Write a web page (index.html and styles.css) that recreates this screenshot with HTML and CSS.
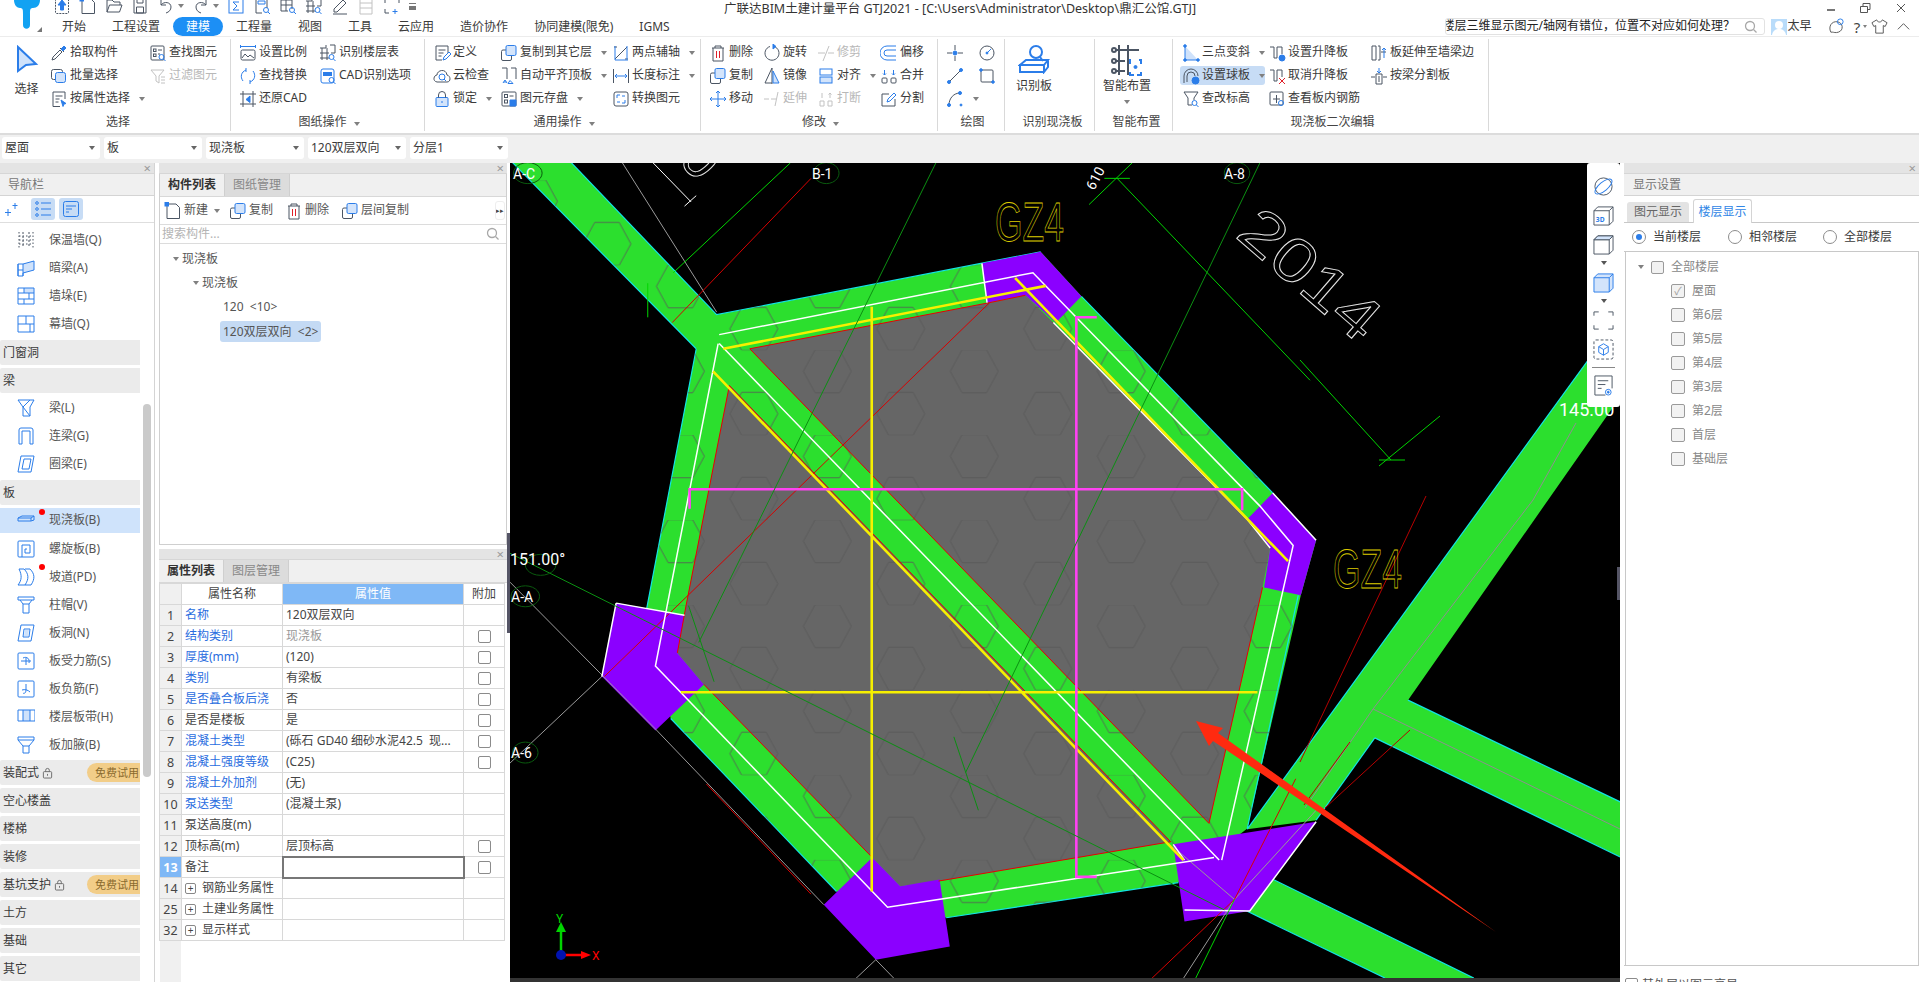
FILE: index.html
```html
<!DOCTYPE html>
<html lang="zh-CN">
<head>
<meta charset="utf-8">
<title>广联达BIM土建计量平台 GTJ2021</title>
<link rel="stylesheet" href="styles.css">
</head>
<body>
<svg class="defs" width="0" height="0">
  <defs>
    <symbol id="upl" viewBox="0 0 18 18"><rect x="2.5" y="1.5" width="13" height="15" rx="1" stroke-dasharray="2 1"/><path class="bf" d="M9 3l4 5h-2.500v5h-3V8H5z"/></symbol>
    <symbol id="new" viewBox="0 0 18 18"><path d="M3 2h9l3.500 3.500V16.500H3z"/><rect class="bf" x="1" y="0.500" width="3.500" height="3.500"/></symbol>
    <symbol id="open" viewBox="0 0 18 18"><path d="M2 15V3h5l2 2h6v3M2 15l2.500-7H17l-2.500 7z"/></symbol>
    <symbol id="save" viewBox="0 0 18 18"><path d="M3 2h12v14H3zM6 2v4h6V2M5.500 10h7v6h-7z"/></symbol>
    <symbol id="undo" viewBox="0 0 18 18"><path d="M4 3v5h5M4 8c3-4 10-3 10 2 0 3-2 5-5 6"/></symbol>
    <symbol id="redo" viewBox="0 0 18 18"><path d="M14 3v5H9M14 8c-3-4-10-3-10 2 0 3 2 5 5 6"/></symbol>
    <symbol id="sum" viewBox="0 0 18 18"><rect class="b" x="2" y="2" width="14" height="14"/><path class="b" d="M12 5H6l4 4-4 4h6"/></symbol>
    <symbol id="calc" viewBox="0 0 18 18"><path d="M3 16V2h11v9M3 16h6"/><path class="b" d="M5 4h7v3H5z"/><circle class="b" cx="13" cy="13" r="2.500"/><path class="b" d="M15 15l2 2"/></symbol>
    <symbol id="grid" viewBox="0 0 18 18"><path d="M2 3h11v9M2 3v11h7M2 8h11M7 3v11"/><circle class="b" cx="13" cy="13" r="2.500"/><path class="b" d="M15 15l2 2"/></symbol>
    <symbol id="pen" viewBox="0 0 18 18"><path d="M3 12L12 3l3 3-9 9H3zM2 17h14"/></symbol>
    <symbol id="ladder" viewBox="0 0 18 18"><path class="g" d="M3 1v16h12V1M3 6h12M3 11h12"/></symbol>
    <symbol id="sel3" viewBox="0 0 18 18"><path d="M2 6V2h4M12 2h4v4M2 12v4h4"/><path class="b" d="M12 12v5M9.500 14.500h5"/></symbol>

    <symbol id="pick" viewBox="0 0 18 18"><path d="M2 16l1-3 7-7 2 2-7 7zM10 4l4 4"/><path class="bf" d="M11 5l3-3 2 2-3 3z"/></symbol>
    <symbol id="batch" viewBox="0 0 18 18"><rect x="1.500" y="2.500" width="11" height="10" rx="2"/><rect class="bff" x="5.500" y="5.500" width="10" height="10" rx="2"/></symbol>
    <symbol id="attr" viewBox="0 0 18 18"><path d="M3 16.500V2h12v7M3 16.500h7M5.500 6h7M5.500 9h4M5.500 12h3"/><path class="bf" d="M11 10l5 3.500-2 .5-1 2.500z"/></symbol>
    <symbol id="find" viewBox="0 0 18 18"><rect x="2" y="2" width="13" height="14" rx="1"/><rect x="4.500" y="5" width="2.500" height="2.500"/><rect x="4.500" y="10" width="2.500" height="2.500"/><path d="M9 6h4M9 10h2"/><circle class="b" cx="12.500" cy="13" r="2.500"/><path class="b" d="M14.500 15l2 2"/></symbol>
    <symbol id="filter" viewBox="0 0 18 18"><path class="g" d="M2 3h13l-5 6v7l-3-2V9zM12 10h4M12 13h4M12 16h4"/></symbol>
    <symbol id="scale" viewBox="0 0 18 18"><rect x="2" y="6" width="14" height="10" rx="1.500"/><path d="M3 14l3-4 3 3 2-2 4 3"/><path class="b" d="M1.500 1v3M16.500 1v3M2 2.500h14"/></symbol>
    <symbol id="replace" viewBox="0 0 18 18"><path class="b" d="M4 14C1 10 2 5 7 3M7 1v4M14 4c3 4 2 9-3 11M11 17v-4"/></symbol>
    <symbol id="restore" viewBox="0 0 18 18"><path d="M1 4h16M1 14h16M4 1v16M14 1v16"/><path class="bf" d="M11 6L7 9.500l4 3z"/></symbol>
    <symbol id="floor" viewBox="0 0 18 18"><path d="M1 4h6V1M1 9h9M1 14h9M3 4v12M8 4v12M11 1h5v8h-4"/><circle class="b" cx="12.500" cy="13" r="2.500"/><path class="b" d="M14.500 15l2 2"/></symbol>
    <symbol id="cad" viewBox="0 0 18 18"><rect class="b" x="2" y="2" width="13" height="14" rx="2"/><path class="bs" d="M4 6h9M4 8h9"/><circle class="b" cx="12.500" cy="13" r="2.500"/><path class="b" d="M14.500 15l2 2"/></symbol>
    <symbol id="def" viewBox="0 0 18 18"><path d="M3 16V2h12v7M3 16h6M5.500 6h7M5.500 9h5M5.500 12h3"/><path class="b" d="M10 16l1-3 5-5 2 2-5 5z"/></symbol>
    <symbol id="cloud" viewBox="0 0 18 18"><path d="M4 15c-5-1-3-7 0-7 0-5 9-7 10 0 4 1 4 7 0 7z"/><circle class="b" cx="9" cy="10" r="3"/><path class="b" d="M11 12l2 2"/></symbol>
    <symbol id="lock" viewBox="0 0 18 18"><rect class="bff" x="3" y="7.500" width="12" height="9" rx="1"/><path d="M5.500 7.500V5a3.500 3.500 0 0 1 7 0v2.500"/><path class="b" d="M9 11v2"/></symbol>
    <symbol id="copyf" viewBox="0 0 18 18"><rect x="1.500" y="6" width="10" height="10.500" rx="1.500"/><rect class="bff" x="6" y="1.500" width="10" height="10" rx="1.500"/></symbol>
    <symbol id="align" viewBox="0 0 18 18"><path d="M2 1h5v11M11 1h5v11"/><path class="b" d="M10 13.500l-2 3h5zM3 16l2-3 2 3M3.700 15h2.600"/></symbol>
    <symbol id="store" viewBox="0 0 18 18"><rect x="2" y="2" width="14" height="14" rx="1"/><rect x="4.500" y="4.500" width="3" height="3"/><rect x="4.500" y="10" width="3" height="3"/><path d="M9.500 6h4"/><path class="bf" d="M10 10h6v6h-6z"/></symbol>
    <symbol id="twopt" viewBox="0 0 18 18"><path d="M3 15L15 3M2 3h3M13 15h3"/><path class="b" d="M3 2v14h13M15 2v13"/></symbol>
    <symbol id="len" viewBox="0 0 18 18"><path d="M1.500 2v14M16.500 2v14"/><path class="b" d="M3 9h12M5 7L3 9l2 2M13 7l2 2-2 2"/></symbol>
    <symbol id="conv" viewBox="0 0 18 18"><rect x="2" y="2" width="14" height="14" rx="2"/><path class="b" d="M5 8V5h3M13 10v3h-3M5 12h3M10 6h3"/></symbol>
    <symbol id="del" viewBox="0 0 18 18"><path d="M3 4h12M6 4V2h6v2M4 4v13h10V4"/><path class="r" d="M7.500 7v7M10.500 7v7"/></symbol>
    <symbol id="rot" viewBox="0 0 18 18"><path d="M11 2.500a7 7 0 1 1-4 0"/><path class="bf" d="M10 0v5l3-2.500z"/></symbol>
    <symbol id="trim" viewBox="0 0 18 18"><path class="g" d="M1 9h7M11 9h6M12 2L6 17"/></symbol>
    <symbol id="offs" viewBox="0 0 18 18"><path class="b" d="M16 2H7a7 7 0 0 0 0 14h9M16 6H7a3 3 0 0 0 0 6h9"/></symbol>
    <symbol id="mirr" viewBox="0 0 18 18"><path d="M9 1L2 16h7M9 1v16"/><path class="l2" d="M10 4l6 12h-6z"/></symbol>
    <symbol id="alg" viewBox="0 0 18 18"><rect class="b" x="3" y="2" width="12" height="6"/><rect class="bff" x="3" y="10" width="12" height="6"/></symbol>
    <symbol id="merge" viewBox="0 0 18 18"><rect x="2" y="11" width="5" height="5" rx="1"/><rect x="11" y="11" width="5" height="5" rx="1"/><path class="b" d="M4.500 3v5M3 6.500L4.500 8 6 6.500M13.500 3v5M12 6.500L13.500 8 15 6.500"/></symbol>
    <symbol id="move" viewBox="0 0 18 18"><path class="b" d="M9 1v16M1 9h16M7 3l2-2 2 2M7 15l2 2 2-2M3 7L1 9l2 2M15 7l2 2-2 2"/></symbol>
    <symbol id="ext" viewBox="0 0 18 18"><path class="g" d="M1 9h5M8 9h5M15 2l-3 14"/></symbol>
    <symbol id="brk" viewBox="0 0 18 18"><path class="g" d="M3 11h4v5H3zM11 11h4v5h-4zM5 3v5M13 3v5M11.500 4.500L13 3l1.500 1.500"/></symbol>
    <symbol id="split" viewBox="0 0 18 18"><path d="M9 4H2v12h13V9"/><path class="b" d="M7 12l1-3 6-6 2 2-6 6z"/></symbol>
    <symbol id="pt" viewBox="0 0 18 18"><path d="M9 1v5M9 12v5M1 9h5M12 9h5"/><circle class="bf" cx="9" cy="9" r="2"/></symbol>
    <symbol id="circ" viewBox="0 0 18 18"><circle cx="9" cy="9" r="7"/><path class="b" d="M9 9l4-4"/><circle class="bf" cx="9" cy="9" r="1"/></symbol>
    <symbol id="line" viewBox="0 0 18 18"><path d="M3 15L15 3"/><circle class="bf" cx="3" cy="15" r="1.500"/><circle class="bf" cx="15" cy="3" r="1.500"/></symbol>
    <symbol id="rc" viewBox="0 0 18 18"><rect x="3" y="3" width="12" height="12" rx="1"/><circle class="bf" cx="15" cy="15" r="1.300"/><circle class="bf" cx="3" cy="3" r="1.300"/></symbol>
    <symbol id="arc" viewBox="0 0 18 18"><path d="M3 15C3 8 8 3 14 3"/><circle class="bf" cx="3" cy="15" r="1.500"/><circle class="bf" cx="14" cy="3" r="1.500"/><circle class="bf" cx="15" cy="15" r="1"/></symbol>
    <symbol id="slope" viewBox="0 0 18 18"><path class="l" d="M3 2v14h13z"/><path class="b" d="M3 2v14h13"/><circle class="bf" cx="3" cy="2" r="1.300"/><circle class="bf" cx="3" cy="16" r="1.300"/><circle class="bf" cx="16" cy="16" r="1.300"/></symbol>
    <symbol id="ball" viewBox="0 0 18 18"><path d="M2 16V9a7 7 0 0 1 14 0"/><path d="M5 15V9a4 4 0 0 1 8 0"/><circle class="bf" cx="13.500" cy="13.500" r="3.500"/></symbol>
    <symbol id="elev" viewBox="0 0 18 18"><path d="M2 2h14l-4 6v2M2 2l4 6v7h4"/><circle class="b" cx="12.500" cy="13" r="2.500"/><path class="b" d="M14.500 15l2 2"/></symbol>
    <symbol id="rise" viewBox="0 0 18 18"><path d="M2 3h4v11h3V3h5v7"/><circle class="bf" cx="14" cy="14" r="3"/></symbol>
    <symbol id="cancel" viewBox="0 0 18 18"><path d="M2 3h4v11h3V3h5v7"/><path class="r" d="M11 11l6 6M17 11l-6 6"/></symbol>
    <symbol id="rebar" viewBox="0 0 18 18"><rect x="2" y="2" width="13" height="13" rx="1"/><path d="M5 9h7M8.500 5v8"/><circle class="b" cx="13" cy="13" r="2.500"/></symbol>
    <symbol id="wall" viewBox="0 0 18 18"><path d="M2 2h4v14H2zM8 2h2v14H8M11 8h5"/><path class="b" d="M14 14V4M12 6l2-2 2 2"/></symbol>
    <symbol id="beamc" viewBox="0 0 18 18"><path d="M1 10h4M13 10h4M6 7h6v10H6zM9 9v6"/><path class="b" d="M9 1v5M7 4l2 2 2-2"/></symbol>

    <symbol id="wq" viewBox="0 0 18 18"><path d="M2 1v16M16 1v16M2 5h14M2 9h14M2 13h14" stroke-dasharray="1.500 2"/><path d="M6 1v16M12 1v16" stroke-dasharray="2 2"/></symbol>
    <symbol id="al" viewBox="0 0 18 18"><path class="l" d="M6 5l11-3v9L6 14z"/><path class="b" d="M1 5l5 0 11-3v9L6 14v3H1zM1 5v12M6 5v12M1 11h5"/></symbol>
    <symbol id="wd" viewBox="0 0 18 18"><path class="l" d="M7 1h10v5H7z"/><path class="b" d="M1 1h16v16H1zM1 6h16M1 12h16M7 1v5M12 6v6M7 12v5"/></symbol>
    <symbol id="mq" viewBox="0 0 18 18"><path class="b" d="M1 1h16v16H1zM1 9h16M9 1v8M13 9v8"/></symbol>
    <symbol id="l" viewBox="0 0 18 18"><path class="b" d="M1 1h16L13 8v9H6v-9zM6 8L13 1M6 8l7 9"/></symbol>
    <symbol id="ll" viewBox="0 0 18 18"><path class="b" d="M2 17V3a2 2 0 0 1 2-2h10a2 2 0 0 1 2 2v14h-3V4H5v13z"/></symbol>
    <symbol id="ql" viewBox="0 0 18 18"><path class="b" d="M4 1h13L14 17H1zM7 4h7L12 14H5z"/></symbol>
    <symbol id="xj" viewBox="0 0 18 18"><path class="b" d="M1 6l4-2h12v4l-3 1H1zM1 6h13v3M14 6l3-2"/></symbol>
    <symbol id="lx" viewBox="0 0 18 18"><rect class="b" x="1" y="1" width="16" height="16" rx="1"/><path class="b" d="M5 17V5h8v8H8V9h2"/></symbol>
    <symbol id="pd" viewBox="0 0 18 18"><path class="b" d="M1 17c4-5 4-10 1-16h5c5 5 5 10 1 16zM8 1h5c5 5 5 10 1 16H8"/></symbol>
    <symbol id="zm" viewBox="0 0 18 18"><path class="b" d="M1 1h16v3H1zM3 4l3 4h6l3-4M6 8v9h6V8"/></symbol>
    <symbol id="bd" viewBox="0 0 18 18"><path class="l" d="M8 6h4l-1 6H7z"/><path class="b" d="M4 1h13L14 17H1zM7 5h6l-1 8H6z"/></symbol>
    <symbol id="sl" viewBox="0 0 18 18"><rect class="b" x="1" y="1" width="16" height="16" rx="1"/><path class="b" d="M4 9h10M6 6c4-2 7 1 6 5M9 6v7"/></symbol>
    <symbol id="fj" viewBox="0 0 18 18"><rect class="b" x="1" y="1" width="16" height="16" rx="1"/><path class="b" d="M5 10c3-1 6 0 8 2M9 4v6c0 3-2 4-3 3"/></symbol>
    <symbol id="bdd" viewBox="0 0 18 18"><path class="l" d="M6 2h7v11H6z"/><path class="b" d="M1 2h17v11H1zM6 2v11M13 2v11"/></symbol>
    <symbol id="jy" viewBox="0 0 18 18"><path class="b" d="M1 1h16v3H1zM1 4l5 6v7h6v-7l5-6M6 10h6"/></symbol>

    <symbol id="v-orb" viewBox="0 0 22 22"><circle cx="11" cy="11" r="9"/><ellipse class="b" cx="11" cy="11" rx="11" ry="4.500" transform="rotate(-40 11 11)"/></symbol>
    <symbol id="v-3d" viewBox="0 0 22 22"><path d="M1 6l4-4h16v15l-4 4H1zM1 6h16v15M17 6l4-4"/><text x="3" y="18" class="t3">3D</text></symbol>
    <symbol id="v-cube" viewBox="0 0 22 22"><path d="M1 6l4-4h16v15l-4 4H1zM1 6h16v15M17 6l4-4"/><path class="lb" d="M1 6l4-4h16l-4 4z"/></symbol>
    <symbol id="v-cube2" viewBox="0 0 22 22"><path class="bff" d="M1 6l4-4h16v15l-4 4H1z"/><path class="b" d="M1 6h16v15M17 6l4-4"/></symbol>
    <symbol id="v-fr" viewBox="0 0 22 22"><path d="M1 6V2h5M16 2h5v4M1 16v4h5M21 16v4h-5"/></symbol>
    <symbol id="v-box" viewBox="0 0 22 22"><rect x="1" y="1" width="20" height="20" rx="2" stroke-dasharray="3 2"/><path class="b" d="M11 5l5 3v6l-5 3-5-3V8zM6 8l5 3 5-3M11 11v6"/></symbol>
    <symbol id="v-lst" viewBox="0 0 22 22"><path d="M2 21V1h18v13M2 21h11M5 6h11M5 10h8M5 14h4"/><circle class="b" cx="16" cy="18" r="3"/><circle class="bf" cx="16" cy="18" r="1"/></symbol>
    <symbol id="pls" viewBox="0 0 18 18"><path class="b" d="M5 9v7M2 12.500h6M12 3v6M9.500 5.500h5"/></symbol>
    <symbol id="lst" viewBox="0 0 18 18"><circle class="b" cx="3" cy="3" r="1.300"/><circle class="b" cx="3" cy="9" r="1.300"/><circle class="b" cx="3" cy="15" r="1.300"/><path class="b" d="M7 3h10M7 9h10M7 15h10"/></symbol>
    <symbol id="cat" viewBox="0 0 18 18"><rect class="b" x="1.500" y="1.500" width="15" height="15" rx="2"/><path class="b" d="M4 6h10M4 9h6M4 12h3"/></symbol>
    <symbol id="mag" viewBox="0 0 14 14"><circle class="gr" cx="6" cy="6" r="4.500"/><path class="gr" d="M9.500 9.500l3 3"/></symbol>
    <symbol id="lk" viewBox="0 0 12 12"><rect x="1.500" y="4.500" width="9" height="7" rx="1"/><path d="M4 4.500V3a2 2 0 0 1 4 0v1.500M6 7v2"/></symbol>
  </defs>
</svg>

<div class="app">
  <header class="top">
    <div class="logo">
      <svg class="logo-svg" viewBox="0 0 26 30" width="26" height="30"><path class="logo-t" d="M0 0h26c0 5-3 8-7 8-3 0-3 2-3 6v11c0 5-7 5-7 0V14c0-4 0-6-3-6-3 0-6-3-6-8z"/></svg>
      <i class="corner"></i>
    </div>
    <div class="top-main">
      <div class="row1">
        <div class="quick">
          <svg class="i"><use href="#upl"/></svg>
          <svg class="i"><use href="#new"/></svg>
          <svg class="i"><use href="#open"/></svg>
          <svg class="i"><use href="#save"/></svg>
          <svg class="i"><use href="#undo"/></svg><i class="caret"></i>
          <svg class="i"><use href="#redo"/></svg><i class="caret"></i>
          <svg class="i"><use href="#sum"/></svg>
          <svg class="i"><use href="#calc"/></svg>
          <svg class="i"><use href="#grid"/></svg>
          <svg class="i"><use href="#floor"/></svg>
          <svg class="i"><use href="#pen"/></svg>
          <svg class="i"><use href="#ladder"/></svg>
          <svg class="i"><use href="#sel3"/></svg>
          <i class="more"></i>
        </div>
        <div class="title">广联达BIM土建计量平台 GTJ2021 - [C:\Users\Administrator\Desktop\鼎汇公馆.GTJ]</div>
        <div class="win">
          <span class="win-min"></span>
          <svg class="win-ico" viewBox="0 0 12 12"><path d="M1.500 4.500h7v6h-7zM4 4.500V1.500h7v6H8.500"/></svg>
          <svg class="win-ico" viewBox="0 0 12 12"><path d="M2 2l8 8M10 2l-8 8"/></svg>
        </div>
      </div>
      <div class="row2">
        <nav class="tabs">
          <span class="tab">开始</span><span class="tab">工程设置</span><span class="tab on">建模</span><span class="tab">工程量</span><span class="tab">视图</span><span class="tab">工具</span><span class="tab">云应用</span><span class="tab">造价协作</span><span class="tab">协同建模(限免)</span><span class="tab">IGMS</span>
        </nav>
        <div class="search"><span class="search-t">楼层三维显示图元/轴网有错位，位置不对应如何处理？</span><svg class="mag"><use href="#mag"/></svg></div>
        <div class="avatar"><svg viewBox="0 0 16 16" width="16" height="16"><rect width="16" height="16" fill="#b9dcfa"/><circle cx="8" cy="6" r="4" fill="#fff"/><path d="M1 16c1-5 4-6 7-6s6 1 7 6z" fill="#fff"/></svg></div>
        <span class="user">太早</span>
        <div class="tools">
          <svg class="tool" viewBox="0 0 18 18"><path d="M3 15c-3-6 1-12 7-11 6 1 7 9 1 11-3 1-5 0-6 0z"/><circle class="b" cx="13" cy="4" r="3"/></svg>
          <span class="qm">?</span><i class="caret tight"></i>
          <svg class="tool shirt" viewBox="0 0 18 18"><path d="M6 2L1 5l2 4 2-1v8h8V8l2 1 2-4-5-3c-1 3-5 3-6 0z"/></svg>
          <svg class="tool" viewBox="0 0 18 18"><path d="M3 12l6-6 6 6"/></svg>
        </div>
      </div>
    </div>
  </header>

  <section class="ribbon">
    <div class="grp g1">
      <div class="grp-body">
        <div class="big big-sel">
          <svg class="big-ico" viewBox="0 0 24 28" width="24" height="28"><path class="sel-arrow" d="M3 2l18 17-10 1-8 6z"/></svg>
          <span>选择</span>
        </div>
        <div class="col w99">
          <div class="it"><svg class="i"><use href="#pick"/></svg>拾取构件</div>
          <div class="it"><svg class="i"><use href="#batch"/></svg>批量选择</div>
          <div class="it"><svg class="i"><use href="#attr"/></svg>按属性选择<i class="caret"></i></div>
        </div>
        <div class="col">
          <div class="it"><svg class="i"><use href="#find"/></svg>查找图元</div>
          <div class="it dis"><svg class="i"><use href="#filter"/></svg>过滤图元</div>
        </div>
      </div>
      <div class="grp-label">选择</div>
    </div>
    <div class="grp g2">
      <div class="grp-body">
        <div class="col w80">
          <div class="it"><svg class="i"><use href="#scale"/></svg>设置比例</div>
          <div class="it"><svg class="i"><use href="#replace"/></svg>查找替换</div>
          <div class="it"><svg class="i"><use href="#restore"/></svg>还原CAD</div>
        </div>
        <div class="col">
          <div class="it"><svg class="i"><use href="#floor"/></svg>识别楼层表</div>
          <div class="it"><svg class="i"><use href="#cad"/></svg>CAD识别选项</div>
        </div>
      </div>
      <div class="grp-label">图纸操作<i class="caret"></i></div>
    </div>
    <div class="grp g3">
      <div class="grp-body">
        <div class="col w67">
          <div class="it"><svg class="i"><use href="#def"/></svg>定义</div>
          <div class="it"><svg class="i"><use href="#cloud"/></svg>云检查</div>
          <div class="it"><svg class="i"><use href="#lock"/></svg>锁定<i class="caret"></i></div>
        </div>
        <div class="col w112">
          <div class="it"><svg class="i"><use href="#copyf"/></svg>复制到其它层<i class="caret"></i></div>
          <div class="it"><svg class="i"><use href="#align"/></svg>自动平齐顶板<i class="caret"></i></div>
          <div class="it"><svg class="i"><use href="#store"/></svg>图元存盘<i class="caret"></i></div>
        </div>
        <div class="col">
          <div class="it"><svg class="i"><use href="#twopt"/></svg>两点辅轴<i class="caret"></i></div>
          <div class="it"><svg class="i"><use href="#len"/></svg>长度标注<i class="caret"></i></div>
          <div class="it"><svg class="i"><use href="#conv"/></svg>转换图元</div>
        </div>
      </div>
      <div class="grp-label">通用操作<i class="caret"></i></div>
    </div>
    <div class="grp g4">
      <div class="grp-body">
        <div class="col w54">
          <div class="it"><svg class="i"><use href="#del"/></svg>删除</div>
          <div class="it"><svg class="i"><use href="#copyf"/></svg>复制</div>
          <div class="it"><svg class="i"><use href="#move"/></svg>移动</div>
        </div>
        <div class="col w54">
          <div class="it"><svg class="i"><use href="#rot"/></svg>旋转</div>
          <div class="it"><svg class="i"><use href="#mirr"/></svg>镜像</div>
          <div class="it dis"><svg class="i"><use href="#ext"/></svg>延伸</div>
        </div>
        <div class="col w63">
          <div class="it dis"><svg class="i"><use href="#trim"/></svg>修剪</div>
          <div class="it"><svg class="i"><use href="#alg"/></svg>对齐<i class="caret"></i></div>
          <div class="it dis"><svg class="i"><use href="#brk"/></svg>打断</div>
        </div>
        <div class="col">
          <div class="it"><svg class="i"><use href="#offs"/></svg>偏移</div>
          <div class="it"><svg class="i"><use href="#merge"/></svg>合并</div>
          <div class="it"><svg class="i"><use href="#split"/></svg>分割</div>
        </div>
      </div>
      <div class="grp-label">修改<i class="caret"></i></div>
    </div>
    <div class="grp g5">
      <div class="grp-body">
        <div class="col w32">
          <div class="it"><svg class="i"><use href="#pt"/></svg></div>
          <div class="it"><svg class="i"><use href="#line"/></svg></div>
          <div class="it"><svg class="i"><use href="#arc"/></svg><i class="caret"></i></div>
        </div>
        <div class="col">
          <div class="it"><svg class="i"><use href="#circ"/></svg></div>
          <div class="it"><svg class="i"><use href="#rc"/></svg></div>
        </div>
      </div>
      <div class="grp-label">绘图</div>
    </div>
    <div class="grp g6">
      <div class="grp-body">
        <div class="big big-rec">
          <svg class="big-ico" viewBox="0 0 32 30" width="32" height="30"><circle class="bth" cx="18" cy="8" r="6"/><path class="bth" d="M22 13l3 4"/><path class="bth" d="M2 21l6-5h22l-4 5zM2 21h24v7H2zM26 21v7l4-5v-7"/></svg>
          <span>识别板</span>
        </div>
      </div>
      <div class="grp-label">识别现浇板</div>
    </div>
    <div class="grp g7">
      <div class="grp-body">
        <div class="big big-smart">
          <svg class="big-ico" viewBox="0 0 32 32" width="32" height="32"><path class="dth" d="M8 1v30M17 1v30M4 6h24M4 17h10M4 27h10"/><circle class="dth" cx="3" cy="6" r="2"/><circle class="dth" cx="3" cy="17" r="2"/><circle class="dth" cx="3" cy="27" r="2"/><path class="bth" d="M20 16h-1v4M28 16h2v4M19 28v3h4M30 28v3h-4" /><circle class="bf" cx="24.500" cy="23" r="1.500"/></svg>
          <span>智能布置</span>
          <i class="caret caret-big"></i>
        </div>
      </div>
      <div class="grp-label">智能布置</div>
    </div>
    <div class="grp g8">
      <div class="grp-body">
        <div class="col w86">
          <div class="it"><svg class="i"><use href="#slope"/></svg>三点变斜<i class="caret"></i></div>
          <div class="it hi"><svg class="i"><use href="#ball"/></svg>设置球板<i class="caret"></i></div>
          <div class="it"><svg class="i"><use href="#elev"/></svg>查改标高</div>
        </div>
        <div class="col w102">
          <div class="it"><svg class="i"><use href="#rise"/></svg>设置升降板</div>
          <div class="it"><svg class="i"><use href="#cancel"/></svg>取消升降板</div>
          <div class="it"><svg class="i"><use href="#rebar"/></svg>查看板内钢筋</div>
        </div>
        <div class="col">
          <div class="it"><svg class="i"><use href="#wall"/></svg>板延伸至墙梁边</div>
          <div class="it"><svg class="i"><use href="#beamc"/></svg>按梁分割板</div>
        </div>
      </div>
      <div class="grp-label">现浇板二次编辑</div>
    </div>
  </section>

  <section class="combos">
    <div class="combo">屋面<i class="caret"></i></div>
    <div class="combo">板<i class="caret"></i></div>
    <div class="combo">现浇板<i class="caret"></i></div>
    <div class="combo">120双层双向<i class="caret"></i></div>
    <div class="combo">分层1<i class="caret"></i></div>
  </section>

  <main class="main">
    <aside class="nav">
      <div class="pane-top"><span class="x">×</span></div>
      <div class="pane-title">导航栏</div>
      <div class="nav-tools">
        <svg class="i"><use href="#pls"/></svg>
        <span class="nt-on"><svg class="i"><use href="#lst"/></svg></span>
        <span class="nt-on"><svg class="i"><use href="#cat"/></svg></span>
      </div>
      <div class="nav-wrap">
        <div class="nav-list">
          <div class="ni"><svg class="i"><use href="#wq"/></svg>保温墙(Q)</div>
          <div class="ni"><svg class="i"><use href="#al"/></svg>暗梁(A)</div>
          <div class="ni"><svg class="i"><use href="#wd"/></svg>墙垛(E)</div>
          <div class="ni"><svg class="i"><use href="#mq"/></svg>幕墙(Q)</div>
          <div class="nb">门窗洞</div>
          <div class="nb">梁</div>
          <div class="ni"><svg class="i"><use href="#l"/></svg>梁(L)</div>
          <div class="ni"><svg class="i"><use href="#ll"/></svg>连梁(G)</div>
          <div class="ni"><svg class="i"><use href="#ql"/></svg>圈梁(E)</div>
          <div class="nb">板</div>
          <div class="ni cur"><svg class="i"><use href="#xj"/></svg><b class="dot"></b>现浇板(B)</div>
          <div class="ni"><svg class="i"><use href="#lx"/></svg>螺旋板(B)</div>
          <div class="ni"><svg class="i"><use href="#pd"/></svg><b class="dot"></b>坡道(PD)</div>
          <div class="ni"><svg class="i"><use href="#zm"/></svg>柱帽(V)</div>
          <div class="ni"><svg class="i"><use href="#bd"/></svg>板洞(N)</div>
          <div class="ni"><svg class="i"><use href="#sl"/></svg>板受力筋(S)</div>
          <div class="ni"><svg class="i"><use href="#fj"/></svg>板负筋(F)</div>
          <div class="ni"><svg class="i"><use href="#bdd"/></svg>楼层板带(H)</div>
          <div class="ni"><svg class="i"><use href="#jy"/></svg>板加腋(B)</div>
          <div class="nb nb1">装配式<svg class="lk"><use href="#lk"/></svg><span class="free">免费试用</span></div>
          <div class="nb">空心楼盖</div>
          <div class="nb">楼梯</div>
          <div class="nb">装修</div>
          <div class="nb">基坑支护<svg class="lk"><use href="#lk"/></svg><span class="free">免费试用</span></div>
          <div class="nb">土方</div>
          <div class="nb">基础</div>
          <div class="nb">其它</div>
        </div>
        <div class="thumb"></div>
      </div>
    </aside>

    <div class="center">
      <section class="cpane">
        <div class="pane-top"><span class="x">×</span></div>
        <div class="ctabs"><span class="ct on">构件列表</span><span class="ct">图纸管理</span></div>
        <div class="ctools">
          <span class="ctb ctb0"><svg class="i"><use href="#new"/></svg>新建<i class="caret"></i></span>
          <span class="ctb"><svg class="i"><use href="#copyf"/></svg>复制</span>
          <span class="ctb"><svg class="i"><use href="#del"/></svg>删除</span>
          <span class="ctb"><svg class="i"><use href="#copyf"/></svg>层间复制</span>
          <span class="morebtn">▸▸</span>
        </div>
        <div class="csearch"><span>搜索构件...</span><svg class="mag"><use href="#mag"/></svg></div>
        <div class="tree">
          <div class="tr l1"><i class="caret"></i>现浇板</div>
          <div class="tr l2"><i class="caret"></i>现浇板</div>
          <div class="tr l3">120&nbsp; &lt;10&gt;</div>
          <div class="tr l3"><span class="trsel">120双层双向&nbsp; &lt;2&gt;</span></div>
        </div>
      </section>
      <section class="ppane">
        <div class="pane-top"><span class="x">×</span></div>
        <div class="ctabs"><span class="ct on">属性列表</span><span class="ct">图层管理</span></div>
        <div class="tbl-wrap">
          <table class="props">
            <colgroup><col class="c0"><col class="c1"><col class="c2"><col class="c3"></colgroup>
            <thead>
              <tr><th class="n"></th><th>属性名称</th><th class="hv">属性值</th><th>附加</th></tr>
            </thead>
            <tbody>
              <tr><td class="n">1</td><td class="bl">名称</td><td>120双层双向</td><td></td></tr>
              <tr><td class="n">2</td><td class="bl">结构类别</td><td class="gy">现浇板</td><td><i class="cb"></i></td></tr>
              <tr><td class="n">3</td><td class="bl">厚度(mm)</td><td>(120)</td><td><i class="cb"></i></td></tr>
              <tr><td class="n">4</td><td class="bl">类别</td><td>有梁板</td><td><i class="cb"></i></td></tr>
              <tr><td class="n">5</td><td class="bl">是否叠合板后浇</td><td>否</td><td><i class="cb"></i></td></tr>
              <tr><td class="n">6</td><td>是否是楼板</td><td>是</td><td><i class="cb"></i></td></tr>
              <tr><td class="n">7</td><td class="bl">混凝土类型</td><td>(砾石 GD40 细砂水泥42.5&nbsp; 现...</td><td><i class="cb"></i></td></tr>
              <tr><td class="n">8</td><td class="bl">混凝土强度等级</td><td>(C25)</td><td><i class="cb"></i></td></tr>
              <tr><td class="n">9</td><td class="bl">混凝土外加剂</td><td>(无)</td><td></td></tr>
              <tr><td class="n">10</td><td class="bl">泵送类型</td><td>(混凝土泵)</td><td></td></tr>
              <tr><td class="n">11</td><td>泵送高度(m)</td><td></td><td></td></tr>
              <tr><td class="n">12</td><td>顶标高(m)</td><td>层顶标高</td><td><i class="cb"></i></td></tr>
              <tr><td class="n act">13</td><td>备注</td><td class="edit"></td><td><i class="cb"></i></td></tr>
              <tr><td class="n">14</td><td><i class="plus">+</i>钢筋业务属性</td><td></td><td></td></tr>
              <tr><td class="n">25</td><td><i class="plus">+</i>土建业务属性</td><td></td><td></td></tr>
              <tr><td class="n">32</td><td><i class="plus">+</i>显示样式</td><td></td><td></td></tr>
            </tbody>
          </table>
        </div>
      </section>
      <span class="handle"></span>
    </div>

    <div class="canvas">
      <svg class="cad-svg" viewBox="510 163 1110 815" width="1110" height="815">
        <defs>
          <pattern id="hex" patternUnits="userSpaceOnUse" width="288" height="162" patternTransform="translate(550 362.500)">
            <path class="hx" d="M25 40.500L48-.5h48l23 41-23 41H48zM169 121.500l23-41h48l23 41-23 41h-48z"/>
            <path class="hx" d="M192 -.5h48l23-41M169 121.500"/>
          </pattern>
        </defs>
        <g transform="translate(510 160) scale(.5102 .5244)" class="cad">
          <g class="beam">
            <path d="M1445 1276L2136 351h40v101L1760 1030l416 194v105L1695 1102l-115 157z"/>
            <path d="M1450 1350l439 210h-174l-284-134z"/>
            <path d="M5 5H120L405 295 1040 175 1120 260 1495 635 1580 725 1550 830 1445 1275 1310 1378 855 1445 640 1395 315 1065 268 855 365 360z"/>
          </g>
          <path class="edge" d="M120 5L405 295 1040 175M1120 260L1495 635M1545 830L1445 1275M855 1445L1310 1378M315 1065L640 1395M268 855L365 360M5 5L365 360M1445 1276L2136 351"/>
          <path class="edge" d="M1695 1102L2176 1329M1760 1030L2176 1224M1695 1102L1580 1259M1450 1350l439 210M1431 1426l284 134"/>
          <g class="slab">
            <path d="M470 360L940 272 1010 258 1065 310 1440 680 1490 740 1475 815 1370 1265z"/>
            <path d="M430 430L1295 1300 840 1375 765 1385 710 1330 380 1000 328 940 345 850z"/>
          </g>
          <g class="hexes">
            <path d="M5 5H120L405 295 410 335 365 360z"/>
            <path d="M405 295L1040 175 1120 260 1495 635 1580 725 1550 830 1445 1275 1310 1378 855 1445 640 1395 315 1065 268 855 365 360z"/>
          </g>
          <g class="purple">
            <path d="M925 197L1040 175 1120 260 1070 310 1010 258 935 272z"/>
            <path d="M1495 635L1580 725 1550 830 1478 815 1490 740 1445 685z"/>
            <path d="M208 845L342 868 328 940 380 1000 285 1088 180 985z"/>
            <path d="M710 1330L765 1385 842 1372 862 1500 717 1525 615 1420z"/>
            <path d="M1300 1305L1580 1262 1450 1432 1322 1452z"/>
          </g>
          <g class="grayln">
            <path d="M220 5L405 290M0 805L285 1085 615 1420M0 1150L180 985M717 1525L670 1568M717 1525L760 1568"/>
            <path d="M1300 1310L1420 1410M1580 1240L1420 1410 1315 1568"/>
          </g>
          <g class="thinred">
            <path d="M318 310L590 35M185 985L940 272M385 1190L590 1400"/>
            <path d="M1420 1410L1250 1568M1420 1410L1540 1180"/>
          </g>
          <path class="redline" d="M470 360L940 272 1010 258M1065 310L1440 680M1475 815L1370 1265 470 360M430 430L1295 1300 840 1375M710 1330L380 1000M328 940L345 850 430 430"/>
          <g class="wline">
            <path d="M410 333L1025 215 1115 305 1470 660 1535 735 1395 1335M408 350L285 965 740 1425 1380 1330M410 350L1390 1335M1065 310L1445 685 1490 740M208 845L342 868M1495 635L1580 725M1300 1305L1322 1335M1322 1430L1450 1432 1580 1262M925 197L935 272M180 985L208 845"/>
          </g>
          <g class="yline">
            <path d="M418 360L1050 240M990 225L1525 765M398 403L1320 1335M335 1015L1465 1015M709 280V1395"/>
          </g>
          <g class="mline">
            <path d="M352 665V628H1435V668M1150 300H1110V1367H1150"/>
          </g>
          <g class="dgreen">
            <path d="M835 5L370 920M350 850L400 995M1470 5L893 1168M870 1100L918 1240M0 750L1400 1430"/>
          </g>
          <g class="bgreen">
            <path d="M550 5L320 215M270 235V300M1190 35L1568 420M1135 85L1220 5M1165 35H1215M1420 1410L1340 1568"/>
          </g>
          <g class="wline wl2"><path d="M280 5L355 80M342 88L365 68"/></g>
          <path class="hcirc" d="M60 752a30 20 0 1 1-.1 0M30 812a28 20 0 1 1-.1 0M30 1110a25 20 0 1 1-.1 0M620 5a25 20 0 1 1-.1 0M1425 5a25 20 0 1 1-.1 0M35 5a28 20 0 1 1-.1 0"/>
        </g>
        <g class="real">
          <path class="thin-gr" d="M1373 709L1620 829M1373 709L1533 500M1373 709L1305 808M1533 500L1576 423"/>
          <path class="thin-rd" d="M1410 730L1325 808M1350 742L1304 805M1426 496L1300 762"/>
          <path class="thin-bg" d="M1300 360L1391 460M1379 466L1440 416M1379 460H1405"/>
          <polygon class="arrow" points="1196,721 1223,728 1218,733 1496,932 1213,741 1209,746"/>
          <text class="ax" x="513" y="179">A-C</text>
          <text class="ax" x="812" y="179">B-1</text>
          <text class="ax" x="1224" y="179">A-8</text>
          <text class="ax ax16" x="510" y="565">151.00°</text>
          <text class="ax" x="511" y="602">A-A</text>
          <text class="ax" x="511" y="758">A-6</text>
          <text class="ax ax18" x="1559" y="416">145.00</text>
          <text class="ax" transform="translate(1094 191) rotate(-62)">610</text>
          <text class="cad-y" x="995" y="241" textLength="69" lengthAdjust="spacingAndGlyphs">GZ4</text>
          <text class="cad-y" x="1333" y="588" textLength="69" lengthAdjust="spacingAndGlyphs">GZ4</text>
          <text class="cad-w" transform="translate(1234 236) rotate(41)" textLength="165" lengthAdjust="spacingAndGlyphs">2014</text>
          <text class="cad-w cad-s" transform="translate(655 139) rotate(45)">10</text>
          <g class="gizmo">
            <path class="gz-g" d="M561 955V932"/><path class="gz-gf" d="M561 922l-5 10h10z"/>
            <path class="gz-r" d="M561 955h20"/><path class="gz-rf" d="M591 955l-10-4v8z"/>
            <circle class="gz-b" cx="561" cy="955" r="5"/>
            <text class="gz-ty" x="556" y="923">Y</text>
            <text class="gz-tx" x="592" y="960">X</text>
          </g>
        </g>
      </svg>
      <div class="vtools">
        <svg class="v"><use href="#v-orb"/></svg>
        <svg class="v"><use href="#v-3d"/></svg>
        <svg class="v"><use href="#v-cube"/></svg>
        <i class="caret vc"></i>
        <svg class="v"><use href="#v-cube2"/></svg>
        <i class="caret vc"></i>
        <svg class="v"><use href="#v-fr"/></svg>
        <svg class="v"><use href="#v-box"/></svg>
        <span class="vsep"></span>
        <svg class="v"><use href="#v-lst"/></svg>
      </div>
      <span class="handle2"></span>
      <div class="cv-strip"></div>
    </div>

    <aside class="disp">
      <div class="pane-top"><span class="x">×</span></div>
      <div class="pane-title">显示设置</div>
      <div class="dtabs"><span class="dt">图元显示</span><span class="dt on">楼层显示</span></div>
      <div class="radios">
        <span class="rd w96"><i class="radio sel"></i>当前楼层</span>
        <span class="rd w95"><i class="radio"></i>相邻楼层</span>
        <span class="rd"><i class="radio"></i>全部楼层</span>
      </div>
      <div class="flist">
        <div class="fi fi0"><i class="caret"></i><i class="cb2"></i>全部楼层</div>
        <div class="fi"><i class="cb2 chk">✓</i>屋面</div>
        <div class="fi"><i class="cb2"></i>第6层</div>
        <div class="fi"><i class="cb2"></i>第5层</div>
        <div class="fi"><i class="cb2"></i>第4层</div>
        <div class="fi"><i class="cb2"></i>第3层</div>
        <div class="fi"><i class="cb2"></i>第2层</div>
        <div class="fi"><i class="cb2"></i>首层</div>
        <div class="fi"><i class="cb2"></i>基础层</div>
      </div>
      <div class="foot"><i class="cb"></i>其外层以图元亮显</div>
    </aside>
  </main>
</div>
</body>
</html>
```
FILE: styles.css
```css
* { box-sizing: border-box; }
html, body { margin: 0; height: 100%; }
body {
  width: 1919px; height: 982px; overflow: hidden; background: #fff;
  font: 12px/1.2 "Noto Sans", "Noto Sans CJK SC", sans-serif; color: #3a3a3a;
}
i { font-style: normal; }
.defs { position: absolute; }
.app { display: flex; flex-direction: column; width: 1919px; height: 982px; }

/* svg icon palette */
.i, .v, .lk, .tool { fill: none; stroke: #4b5563; stroke-width: 1; flex: none; }
.i { width: 18px; height: 18px; }
.b { stroke: #2b7de9; }
.bs { stroke: #2b7de9; stroke-width: 2; }
.bf { fill: #2b7de9; stroke: #2b7de9; }
.bff { fill: #d3e4fb; stroke: #2b7de9; }
.l { fill: #cfe2fb; stroke: none; }
.l2 { fill: #cfe2fb; stroke: #2b7de9; }
.lb { fill: #d3e4fb; stroke: #4b5563; }
.g { stroke: #c2c2c2; }
.r { stroke: #e0202a; }
.gr { stroke: #a8a8a8; fill: none; stroke-width: 1.300; }
.t3 { font: bold 7px "Noto Sans", sans-serif; fill: #2b7de9; stroke: none; }

.caret { display: inline-block; width: 0; height: 0; border-left: 3.500px solid transparent; border-right: 3.500px solid transparent; border-top: 4px solid #808080; margin-left: 7px; flex: none; }

/* top */
.top { height: 37px; display: flex; flex: none; border-bottom: 1px solid #ececec; position: relative; }
.logo { width: 49px; flex: none; padding-left: 14px; position: relative; }
.logo-svg { display: block; }
.logo-t { fill: #12a2f2; }
.corner { position: absolute; left: 37px; top: 27px; border-left: 5px solid transparent; border-bottom: 5px solid #777; }
.top-main { flex: 1; min-width: 0; display: flex; flex-direction: column; }
.row1 { height: 17px; display: flex; align-items: flex-start; }
.quick { width: 400px; height: 15px; overflow: hidden; flex: none; padding-left: 4px; display: flex; align-items: flex-start; gap: 8px; }
.quick .i { margin-top: -3px; }
.quick .caret { margin: 4px 0 0 -5px; }
.more { width: 7px; height: 7px; border-top: 1px solid #777; border-bottom: 4px solid #777; margin: 3px 0 0 0; }
.title { margin-left: 275px; font-size: 12.500px; line-height: 17px; white-space: nowrap; color: #333; }
.win { margin-left: auto; display: flex; align-items: center; gap: 24px; height: 16px; padding-right: 12px; }
.win-min { display: block; width: 8px; height: 2px; background: #777; margin-top: 4px; }
.win-ico { width: 12px; height: 12px; fill: none; stroke: #555; }
.row2 { flex: 1; display: flex; align-items: center; }
.tabs { display: flex; flex: none; }
.tab { height: 19px; line-height: 19px; padding: 0 13px; white-space: nowrap; }
.tab.on { background: #1c8ff5; color: #fff; border-radius: 10px; }
.search { margin-left: 762px; width: 320px; height: 17px; border: 1px solid #e2e2e2; border-radius: 3px; background: #fff; display: flex; align-items: center; flex: none; overflow: hidden; color: #222; justify-content: space-between; padding-right: 6px; }
.search-t { width: 296px; overflow: hidden; white-space: nowrap; text-indent: -3px; }
.mag { width: 14px; height: 14px; flex: none; }
.avatar { margin-left: 6px; width: 16px; height: 16px; flex: none; }
.user { margin-left: 1px; white-space: nowrap; flex: none; }
.tools { margin-left: 16px; display: flex; align-items: center; flex: none; }
.tool { width: 17px; height: 17px; margin-right: 9px; stroke: #555; }
.tool.shirt { margin-right: 7px; }
.qm { font-size: 15px; color: #444; }
.caret.tight { margin: 0 4px 0 3px; border-left-width: 2.500px; border-right-width: 2.500px; border-top-width: 3px; }

/* ribbon */
.ribbon { height: 98px; flex: none; display: flex; border-bottom: 2px solid #dcdcdc; padding-top: 2px; }
.grp { flex: none; height: 92px; border-right: 1px solid #d9d9d9; display: flex; flex-direction: column; }
.g1 { width: 231px; } .g2 { width: 194px; padding-left: 8px; } .g3 { width: 276px; padding-left: 8px; }
.g4 { width: 237px; padding-left: 8px; } .g5 { width: 67px; padding-left: 8px; } .g6 { width: 90px; }
.g7 { width: 78px; } .g8 { width: 316px; padding-left: 9px; }
.grp-body { flex: 1; display: flex; padding-top: 2px; min-height: 0; }
.grp-label { height: 20px; padding: 2px 0 0 3px; line-height: 18px; text-align: center; color: #444; white-space: nowrap; margin-left: -8px; }
.g1 .grp-label, .g6 .grp-label, .g7 .grp-label { margin-left: 0; padding-left: 6px; }
.col { flex: none; display: flex; flex-direction: column; }
.w99 { width: 99px; } .w80 { width: 80px; } .w67 { width: 67px; } .w112 { width: 112px; }
.w54 { width: 54px; } .w63 { width: 63px; } .w32 { width: 32px; } .w86 { width: 86px; } .w102 { width: 102px; }
.it { height: 23px; display: flex; align-items: center; gap: 2px; white-space: nowrap; }
.dis { color: #b8b8b8; }
.hi { background: #c7dcf5; border-radius: 3px; width: 85px; margin: 2px 0 2px -2px; height: 19px; padding-left: 2px; }
.big { display: flex; flex-direction: column; align-items: center; flex: none; }
.big-sel { width: 47px; margin-left: 3px; padding-top: 4px; }
.big-sel span { margin-top: 9px; }
.sel-arrow { fill: #cfe2fb; stroke: #2b7de9; stroke-width: 2; }
.big-rec { width: 58px; padding-top: 3px; }
.big-rec span { margin-top: 5px; }
.bth { fill: none; stroke: #2b7de9; stroke-width: 2; }
.dth { fill: none; stroke: #4b5563; stroke-width: 2; }
.big-smart { width: 64px; padding-top: 3px; }
.big-smart span { margin-top: 3px; }
.caret-big { margin: 7px 0 0 0; }

/* combos */
.combos { height: 28px; flex: none; background: #f0f0f0; display: flex; gap: 4px; padding: 2px 0 0 2px; }
.combo { width: 98px; height: 22px; background: #fff; border-radius: 3px; line-height: 22px; padding-left: 3px; display: flex; align-items: center; justify-content: space-between; padding-right: 5px; }
.combo .caret { border-top-color: #666; border-left-width: 3px; border-right-width: 3px; }

/* main layout */
.main { flex: 1; min-height: 0; display: flex; }
.pane-top { height: 11px; background: #e4e4e4; border-bottom: 1px solid #d6d6d6; position: relative; flex: none; }
.x { position: absolute; right: 3px; top: -2px; font-size: 13px; line-height: 14px; color: #9a9a9a; }
.pane-title { height: 22px; background: #f0f0f0; border-bottom: 1px solid #d4d4d4; line-height: 21px; color: #777; flex: none; }

.nav { width: 155px; flex: none; border-right: 1px solid #d4d4d4; margin-right: 4px; display: flex; flex-direction: column; }
.nav .pane-title { padding-left: 8px; }
.nav-tools { height: 27px; flex: none; display: flex; align-items: center; border-bottom: 1px solid #dedede; padding-left: 3px; gap: 10px; }
.nt-on { display: flex; align-items: center; justify-content: center; width: 24px; height: 22px; background: #c7dcf5; border-radius: 3px; margin-right: -6px; }
.nav-wrap { flex: 1; display: flex; min-height: 0; position: relative; }
.nav-list { width: 140px; flex: none; padding-top: 3px; }
.ni { height: 28px; display: flex; align-items: center; padding-left: 17px; gap: 14px; color: #555; position: relative; }
.ni.cur { height: 25px; background: #cfe3fb; margin-bottom: 2px; }
.dot { position: absolute; left: 39px; top: 1px; width: 6px; height: 6px; border-radius: 50%; background: #f00; }
.nb { height: 25px; background: #ebebeb; margin-bottom: 3px; padding-left: 3px; line-height: 25px; color: #3a3a3a; display: flex; align-items: center; position: relative; border-radius: 2px 0 0 2px; }
.ni + .nb { margin-top: 2px; }
.nb + .ni { margin-top: -2px; }
.nb + .ni.cur { margin-top: 0; }
.ni + .nb1 { margin-top: 1px; }
.lk { width: 11px; height: 12px; margin-left: 3px; stroke: #666; }
.free { position: absolute; right: 0; top: 3px; width: 53px; height: 19px; border-radius: 10px 0 0 10px; background: #f2cd88; color: #8a6a2e; font-size: 11px; line-height: 19px; padding-left: 8px; white-space: nowrap; }
.thumb { position: absolute; left: 143px; top: 181px; width: 8px; height: 373px; border-radius: 4px; background: #cacaca; }

.center { width: 348px; flex: none; margin-right: 3px; display: flex; flex-direction: column; position: relative; }
.handle { position: absolute; left: 348px; top: 370px; width: 3px; height: 100px; background: #556; }
.handle2 { position: absolute; right: 0; top: 404px; width: 3px; height: 33px; background: #556; }
.cpane { height: 382px; flex: none; border-bottom: 1px solid #cfcfcf; border-left: 1px solid #cfcfcf; border-right: 1px solid #cfcfcf; display: flex; flex-direction: column; }
.ppane { flex: 1; min-height: 0; margin-top: 4px; display: flex; flex-direction: column; }
.cpane .pane-top { margin: 0 -1px; }
.ctabs { height: 23px; flex: none; background: #f0f0f0; display: flex; border-bottom: 1px solid #d8d8d8; }
.ct { width: 65px; line-height: 22px; text-align: center; color: #888; background: #dcdcdc; border-right: 1px solid #cfcfcf; }
.ct.on { color: #333; font-weight: 700; background: #f0f0f0; }
.ctools { height: 28px; flex: none; display: flex; align-items: center; border-bottom: 1px solid #dcdcdc; padding-left: 4px; position: relative; }
.ctb { display: flex; align-items: center; margin-right: 12px; color: #555; white-space: nowrap; }
.ctb0 { margin-right: 9px; }
.ctb0 .caret { margin-left: 6px; }
.ctb .i { margin-right: 2px; }
.morebtn { position: absolute; right: 1px; top: 4px; width: 10px; height: 19px; border: 1px solid #eee; border-radius: 3px; font-size: 7px; line-height: 17px; text-align: center; color: #444; overflow: hidden; }
.csearch { height: 19px; flex: none; display: flex; align-items: center; justify-content: space-between; color: #b4b4b4; border-bottom: 1px solid #dcdcdc; padding: 0 6px 0 2px; }
.tree { flex: 1; padding-top: 3px; color: #555; }
.tr { height: 24px; display: flex; align-items: center; white-space: nowrap; }
.tr .caret { margin: 0 3px 0 0; }
.l1 { padding-left: 13px; } .l2 { padding-left: 33px; } .l3 { padding-left: 63px; }
.trsel { display: block; background: #c4daf4; border-radius: 3px; line-height: 21px; height: 21px; margin-left: -3px; padding: 0 3px; }

.tbl-wrap { flex: 1; min-height: 0; background: linear-gradient(to right, #fff 0, #fff 1px, #f0f0f0 1px, #f0f0f0 22px, #fff 22px); }
.props { border-collapse: collapse; table-layout: fixed; width: 345px; }
.c0 { width: 22px; } .c1 { width: 101px; } .c2 { width: 181px; } .c3 { width: 41px; }
.props th, .props td { height: 21px; padding: 0 3px; border: 1px solid #d8d8d8; font-weight: 400; white-space: nowrap; overflow: hidden; color: #444; background: #fff; }
.props th { text-align: center; }
.props .n { background: #f0f0f0; text-align: center; padding: 0; color: #444; font-size: 12.500px; }
.props .hv { background: #7fb8f6; color: #fff; }
.props .bl { color: #2a6de0; }
.props .gy { color: #999; }
.props .act { background: #7fb8f6; color: #fff; font-weight: 700; }
.props .edit { border: 2px solid #777; }
.cb { display: block; width: 13px; height: 13px; margin: 0 auto; border: 1px solid #8b8b8b; border-radius: 2px; background: #fff; }
.plus { display: inline-block; width: 11px; height: 11px; border: 1px solid #888; border-radius: 2px; margin: 0 6px 0 0; font-size: 10px; line-height: 9px; text-align: center; vertical-align: 0; }

.canvas { width: 1110px; flex: none; margin-right: 4px; position: relative; background: #000; display: flex; flex-direction: column; overflow: hidden; }
.cad-svg { display: block; flex: none; background: #000; }
.cv-strip { height: 4px; background: #333; flex: none; }
.cad path { vector-effect: non-scaling-stroke; }
.beam path { fill: #2cdf2e; }
.edge { fill: none; stroke: #12e3e3; stroke-width: 1.200; }
.slab path { fill: #666; }
.hexes path { fill: url(#hex); }
.hx { fill: none; stroke: #585858; stroke-width: 1.600; }
.purple path { fill: #8b00ff; }
.wline path { fill: none; stroke: #fff; stroke-width: 1.500; }
.wl2 path { stroke-width: 1; }
.yline path { fill: none; stroke: #f7f000; stroke-width: 2.600; }
.mline path { fill: none; stroke: #ff42f2; stroke-width: 2.600; }
.redline { fill: none; stroke: #e80000; stroke-width: 1; }
.thinred path { fill: none; stroke: #d80000; stroke-width: 1; }
.grayln path { fill: none; stroke: #9a9a9a; stroke-width: 1; }
.dgreen path { fill: none; stroke: #0b8f12; stroke-width: 1; }
.bgreen path { fill: none; stroke: #00d400; stroke-width: 1; }
.hcirc { fill: none; stroke: #0a5a0e; stroke-width: 1; }
.thin-gr { fill: none; stroke: #8f8f8f; stroke-width: 1; }
.thin-rd { fill: none; stroke: #b50000; stroke-width: 1; }
.thin-bg { fill: none; stroke: #00d400; stroke-width: 1; }
.arrow { fill: #ff2a10; }
.ax { font: 14px "Roboto", sans-serif; fill: #fff; }
.ax16 { font-size: 16px; }
.ax18 { font-size: 18px; }
.cad-y { font: 56px "Liberation Sans", sans-serif; fill: none; stroke: #dccb00; stroke-width: .8; }
.cad-w { font: 62px "Liberation Sans", sans-serif; fill: none; stroke: #e8e8e8; stroke-width: .9; }
.cad-s { font-size: 56px; }
.gz-g { stroke: #00d400; stroke-width: 2.500; }
.gz-gf { fill: #00d400; }
.gz-r { stroke: #f00; stroke-width: 2.500; }
.gz-rf { fill: #f00; }
.gz-b { fill: #0012b0; }
.gz-ty { font: 12px "Roboto", sans-serif; fill: #00d400; }
.gz-tx { font: 12px "Roboto", sans-serif; fill: #f00; }

.vtools { position: absolute; right: 0; top: 0; width: 33px; height: 244px; background: #fff; border-radius: 3px; display: flex; flex-direction: column; align-items: center; padding-top: 12px; }
.v { width: 21px; height: 23px; margin-bottom: 6px; stroke: #4b5563; }
.vc { margin: -1px 0 6px; border-top-color: #555; }
.vsep { width: 23px; height: 1px; background: #888; margin: 0 0 6px; flex: none; }

.disp { flex: 1; min-width: 0; display: flex; flex-direction: column; position: relative; }
.disp .pane-title { padding-left: 9px; }
.dtabs { height: 27px; flex: none; display: flex; align-items: flex-end; padding-left: 3px; gap: 4px; border-bottom: 1px solid #c8c8c8; }
.dt { width: 62px; height: 20px; background: #e3e3e3; border-radius: 3px 3px 0 0; line-height: 20px; text-align: center; color: #666; }
.dt.on { width: 59px; background: #fff; color: #2f86e6; height: 24px; line-height: 23px; border: 1px solid #d4d4d4; border-bottom: 0; margin-bottom: -1px; }
.radios { height: 29px; flex: none; display: flex; align-items: center; padding-left: 8px; border-bottom: 1px solid #c8c8c8; }
.rd { display: flex; align-items: center; white-space: nowrap; color: #3a3a3a; }
.w96 { width: 96px; } .w95 { width: 95px; }
.radio { width: 14px; height: 14px; border: 1px solid #8c8c8c; border-radius: 50%; margin-right: 7px; flex: none; position: relative; }
.radio.sel::after { content: ""; position: absolute; left: 3px; top: 3px; width: 6px; height: 6px; background: #2b7de9; border-radius: 50%; }
.flist { flex: 1; min-height: 0; margin-left: 1px; border-left: 1px solid #c8c8c8; border-right: 1px solid #c8c8c8; padding-left: 45px; padding-top: 3px; color: #888; }
.fi { height: 24px; display: flex; align-items: center; gap: 7px; }
.fi0 { margin-left: -33px; }
.fi0 .caret { margin: 0; }
.fi0 .cb2 { width: 13px; height: 13px; }
.cb2 { width: 14px; height: 14px; border: 1px solid #9a9a9a; border-radius: 2px; background: #f2f2f2; flex: none; display: block; font-size: 11px; line-height: 12px; text-align: center; color: #a0a0a0; }
.foot { height: 17px; flex: none; border-top: 1px solid #c8c8c8; display: flex; padding: 12px 0 0 1px; gap: 4px; white-space: nowrap; overflow: hidden; color: #555; line-height: 14px; }
.foot .cb { margin: 0; flex: none; }
```
